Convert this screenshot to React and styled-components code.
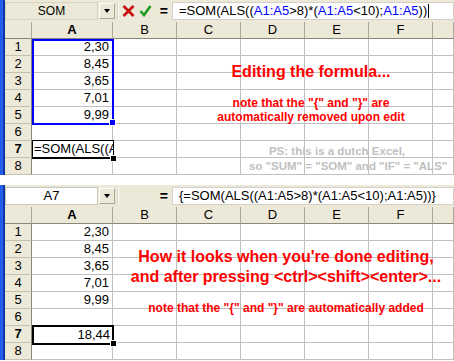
import React from 'react';
import styled, { createGlobalStyle } from 'styled-components';

const VALUES = ['2,30', '8,45', '3,65', '7,01', '9,99', '', '', ''];
const LETTERS = ['A', 'B', 'C', 'D', 'E', 'F', ''];

const GlobalStyle = createGlobalStyle`
  html, body {
    margin: 0;
    padding: 0;
    background: #fff;
  }
  body {
    font-family: "Liberation Sans", Arial, sans-serif;
    font-size: 13px;
    color: #000;
  }
`;

const Page = styled.div`
  width: 454px;
  height: 361px;
  overflow: hidden;
  display: flex;
  flex-direction: column;
  gap: 10px;
`;

const Window = styled.div`
  position: relative;
  display: flex;
  height: 175px;
`;

const Edge = styled.div`
  width: 5px;
  flex: none;
  background: linear-gradient(to right, #1f5be8 0, #2a62ec 3px, #0c3bb8 3px, #0a2f96 5px);
`;

const Main = styled.div`
  flex: 1;
  display: flex;
  flex-direction: column;
`;

const FormulaBar = styled.div`
  height: 22px;
  display: flex;
  align-items: center;
  background: #ece9d8;
`;

const NameBox = styled.div`
  width: 93px;
  height: 18px;
  box-sizing: border-box;
  border: 1px solid ${(p) => (p.$editing ? '#d6d3c3' : '#c9c7ba')};
  background: ${(p) => (p.$editing ? '#ece9d8' : '#fff')};
  text-align: center;
  line-height: 16px;
  font-size: ${(p) => (p.$editing ? '12px' : '13px')};
`;

const DropButton = styled.div`
  width: 16px;
  height: 16px;
  margin-left: 1px;
  box-sizing: border-box;
  border: 1px solid #fff;
  border-right-color: #aca899;
  border-bottom-color: #aca899;
  background: #ece9d8;
  display: flex;
  align-items: center;
  justify-content: center;
`;

const Arrow = styled.span`
  width: 0;
  height: 0;
  border-left: 3.5px solid transparent;
  border-right: 3.5px solid transparent;
  border-top: 4px solid #000;
`;

const Divider = styled.div`
  width: 1px;
  height: 18px;
  margin-left: 2px;
  background: #d6d3c3;
  border-right: 1px solid #fff;
`;

const Actions = styled.div`
  flex: 1;
  height: 18px;
  display: flex;
  align-items: center;
  justify-content: flex-end;
`;

const IconSlot = styled.span`
  display: flex;
  margin-right: ${(p) => p.$gap}px;
`;

const Equals = styled.span`
  font-weight: 700;
  font-size: 14px;
  margin-right: 4px;
`;

const FormulaInput = styled.div`
  width: 282px;
  height: 18px;
  box-sizing: border-box;
  border: 1px solid #d4d0c8;
  background: #fff;
  padding-left: 6px;
  line-height: 16px;
  white-space: nowrap;
  overflow: hidden;
  display: flex;
  align-items: center;
`;

const Ref = styled.span`
  color: #0000ff;
`;

const Caret = styled.span`
  display: inline-block;
  width: 1px;
  height: 14px;
  margin-left: 1px;
  background: #000;
`;

const Sheet = styled.div`
  display: grid;
  grid-template-columns: 27px 81px repeat(5, 64px) 21px;
  grid-auto-rows: 17px;
`;

const Corner = styled.div`
  background: #ece9d8;
  border-right: 1px solid #aca899;
  border-bottom: 1px solid #8a8778;
`;

const ColHead = styled.div`
  background: #ece9d8;
  border-right: 1px solid #aca899;
  border-bottom: 1px solid #8a8778;
  text-align: center;
  line-height: 16px;
  font-weight: ${(p) => (p.$active ? 700 : 400)};
`;

const RowHead = styled.div`
  background: #ece9d8;
  border-right: 1px solid #8a8778;
  border-bottom: 1px solid #c5c2b2;
  text-align: center;
  line-height: 16px;
  font-weight: ${(p) => (p.$active ? 700 : 400)};
`;

const Cell = styled.div`
  background: #fff;
  border-right: 1px solid #c0c0c0;
  border-bottom: 1px solid #c0c0c0;
  text-align: right;
  padding: 0 3px;
  line-height: 16px;
  overflow: hidden;
`;

const RangeBox = styled.div`
  position: absolute;
  left: 32px;
  top: 39px;
  width: 82px;
  height: 86px;
  box-sizing: border-box;
  border: 2px solid #0000ff;
`;

const ActiveCell = styled.div`
  position: absolute;
  left: 32px;
  top: 140px;
  width: 82px;
  height: ${(p) => (p.$thick ? 20 : 19)}px;
  box-sizing: border-box;
  border: ${(p) => (p.$thick ? 2 : 1)}px solid #000;
  border-bottom-width: 2px;
  background: #fff;
  padding: 0 ${(p) => (p.$thick ? 2 : 1)}px;
  line-height: 16px;
  text-align: ${(p) => (p.$thick ? 'right' : 'left')};
  white-space: nowrap;
  overflow: hidden;
`;

const Handle = styled.div`
  position: absolute;
  left: ${(p) => p.$x}px;
  top: ${(p) => p.$y}px;
  width: 5px;
  height: 5px;
  background: ${(p) => p.$color};
  border: 1px solid #fff;
`;

const Note = styled.div`
  position: absolute;
  left: ${(p) => p.$x}px;
  top: ${(p) => p.$y}px;
  width: ${(p) => p.$w}px;
  text-align: ${(p) => p.$align || 'center'};
  white-space: nowrap;
  font-weight: 700;
  font-size: ${(p) => p.$size}px;
  line-height: ${(p) => p.$lh}px;
  color: ${(p) => p.$color || '#ff0000'};
`;

const CrossIcon = () => (
  <svg width="13" height="12" viewBox="0 0 13 12">
    <path d="M1.5 1 L11.5 11 M11.5 1 L1.5 11" stroke="#c81010" strokeWidth="2.6" />
  </svg>
);

const CheckIcon = () => (
  <svg width="13" height="12" viewBox="0 0 13 12">
    <path d="M1.5 6 L5 10 L11.5 1" stroke="#1f9a1f" strokeWidth="2.6" fill="none" />
  </svg>
);

const Panel = ({ name, editing, formula, children }) => (
  <Window>
    <Edge />
    <Main>
      <FormulaBar>
        <NameBox $editing={editing}>{name}</NameBox>
        <DropButton>
          <Arrow />
        </DropButton>
        <Divider />
        <Actions>
          {editing && (
            <>
              <IconSlot $gap={4}>
                <CrossIcon />
              </IconSlot>
              <IconSlot $gap={8}>
                <CheckIcon />
              </IconSlot>
            </>
          )}
          <Equals>=</Equals>
        </Actions>
        <FormulaInput>{formula}</FormulaInput>
      </FormulaBar>
      <Sheet>
        <Corner />
        {LETTERS.map((l, i) => (
          <ColHead key={i} $active={l === 'A'}>
            {l}
          </ColHead>
        ))}
        {VALUES.map((v, r) => (
          <React.Fragment key={r}>
            <RowHead $active={r === 6}>{r + 1}</RowHead>
            <Cell>{v}</Cell>
            {LETTERS.slice(1).map((l, c) => (
              <Cell key={c} />
            ))}
          </React.Fragment>
        ))}
      </Sheet>
    </Main>
    {children}
  </Window>
);

const ArrayFormula = ({ braces }) => (
  <span>
    {braces && '{'}=SOM(ALS((
    {braces ? 'A1:A5' : <Ref>A1:A5</Ref>}
    &gt;8)*(
    {braces ? 'A1:A5' : <Ref>A1:A5</Ref>}
    &lt;10);
    {braces ? 'A1:A5' : <Ref>A1:A5</Ref>}
    )){braces && '}'}
  </span>
);

export default function App() {
  return (
    <>
      <GlobalStyle />
      <Page>
        <Panel
          name="SOM"
          editing
          formula={
            <>
              <ArrayFormula />
              <Caret />
            </>
          }
        >
          <RangeBox />
          <Handle $x={109} $y={119} $color="#0000ff" />
          <ActiveCell>=SOM(ALS((A1:A5&gt;8)*(A1:A5&lt;10);A1:A5))</ActiveCell>
          <Handle $x={110} $y={155} $color="#000" />
          <Note $x={161} $y={62} $w={300} $size={16} $lh={20}>
            Editing the formula...
          </Note>
          <Note $x={161} $y={96} $w={300} $size={12} $lh={14}>
            note that the "{'{'}" and "{'}'}" are
            <br />
            automatically removed upon edit
          </Note>
          <Note $x={267} $y={144} $w={140} $size={11.5} $lh={15} $color="#c0c0c0">
            PS: this is a dutch Excel,
          </Note>
          <Note $x={249} $y={159} $w={204} $size={11.5} $lh={15} $color="#c0c0c0" $align="left">
            so "SUM" = "SOM" and "IF" = "ALS"
          </Note>
        </Panel>
        <Panel name="A7" formula={<ArrayFormula braces />}>
          <ActiveCell $thick>18,44</ActiveCell>
          <Handle $x={110} $y={155} $color="#000" />
          <Note $x={126} $y={62} $w={320} $size={16} $lh={20}>
            How it looks when you're done editing,
            <br />
            and after pressing &lt;ctrl&gt;&lt;shift&gt;&lt;enter&gt;...
          </Note>
          <Note $x={126} $y={116} $w={320} $size={12} $lh={14}>
            note that the "{'{'}" and "{'}'}" are automatically added
          </Note>
        </Panel>
      </Page>
    </>
  );
}
